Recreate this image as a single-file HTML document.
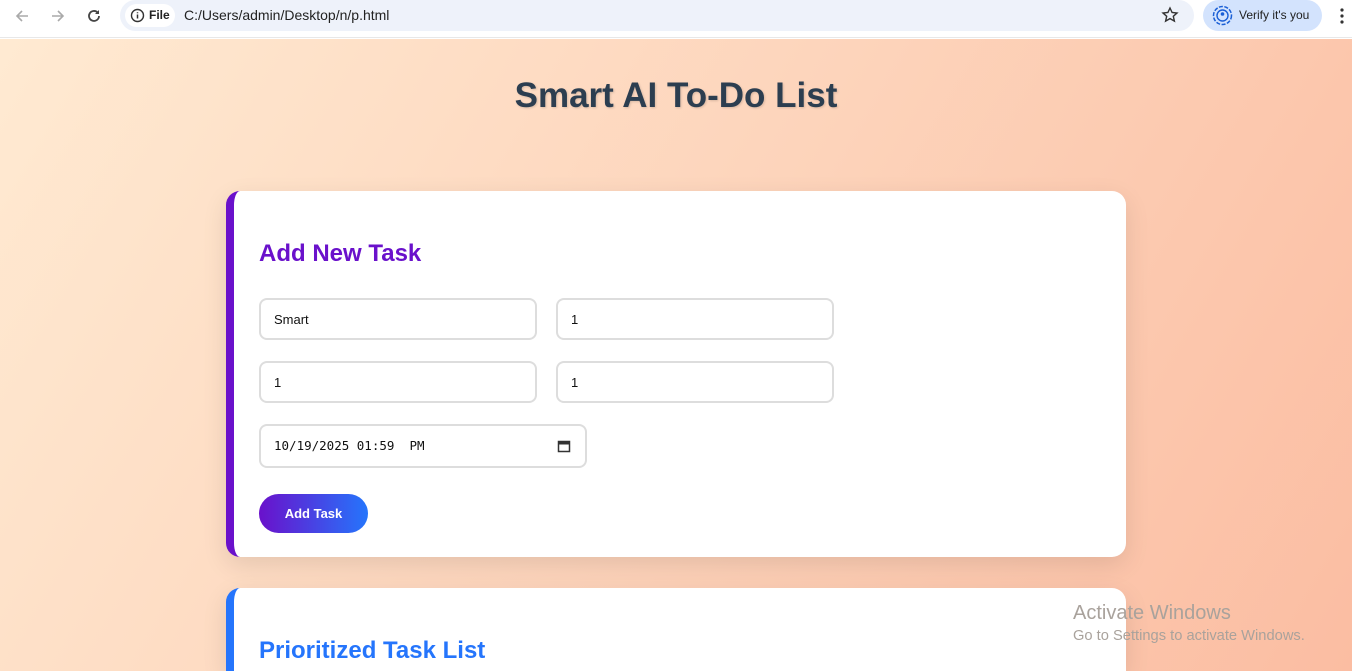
<!DOCTYPE html>
<html><head><meta charset="utf-8"><style>
*{box-sizing:border-box;margin:0;padding:0}
html,body{width:1352px;height:671px;overflow:hidden}
body{font-family:"Liberation Sans",sans-serif;position:relative;background:#fff}
.bar{position:absolute;left:0;top:0;width:1352px;height:38px;background:#fff;border-bottom:1px solid #e8e8e8}
.omni{position:absolute;left:120px;top:0;width:1074px;height:31px;background:#eef2fa;border-radius:16px}
.chip{position:absolute;left:125px;top:4px;width:50px;height:23px;background:#fff;border-radius:12px;font-size:12px;font-weight:bold;color:#222;line-height:23px;padding-left:24px}
.url{position:absolute;left:184px;top:7px;font-size:14px;color:#222}
.verify{position:absolute;left:1203px;top:0;width:119px;height:31px;background:#d3e3fd;border-radius:16px;font-size:12px;color:#1f1f1f;line-height:31px;padding-left:36px}
.page{position:absolute;left:0;top:39px;width:1352px;height:632px;background:linear-gradient(120deg,#ffead2 0%,#fdd4bb 50%,#fbbda2 100%)}
h1{position:absolute;top:76px;left:0;width:1352px;text-align:center;font-size:35px;color:#2c3e50;font-weight:bold;text-shadow:1px 1px 2px rgba(0,0,0,.15)}
.card{position:absolute;left:226px;width:900px;background:#fff;border-radius:14px;box-shadow:0 8px 25px rgba(0,0,0,.1)}
.c1{top:191px;height:366px;border-left:8px solid #6a11cb}
.c2{top:588px;height:83px;border-left:8px solid #2575fc;border-bottom-left-radius:0;border-bottom-right-radius:0}
h2{position:absolute;left:25px;font-size:24px;font-weight:bold}
.in{position:absolute;height:42px;border:2px solid #ddd;border-radius:8px;font-size:13px;color:#111;padding-left:13px;line-height:40px}
.btn{position:absolute;left:25px;top:303px;width:109px;height:39px;border-radius:20px;background:linear-gradient(90deg,#6a11cb,#2575fc);color:#fff;font-weight:bold;font-size:13px;text-align:center;line-height:39px}
.aw{position:absolute;left:1073px;top:602px;color:#a9a29c;font-size:20px}
.aw2{position:absolute;left:1073px;top:628px;color:#a9a29c;font-size:14.7px}
</style></head><body>
<div class="bar">
<svg style="position:absolute;left:13px;top:7px" width="18" height="18" viewBox="0 0 18 18"><path d="M15 9H4M9 4L4 9l5 5" stroke="#aaa" stroke-width="1.6" fill="none"/></svg>
<svg style="position:absolute;left:49px;top:7px" width="18" height="18" viewBox="0 0 18 18"><path d="M3 9h11M9 4l5 5-5 5" stroke="#aaa" stroke-width="1.6" fill="none"/></svg>
<svg style="position:absolute;left:85px;top:7px" width="18" height="18" viewBox="0 0 18 18"><path d="M14 9a5 5 0 1 1-1.5-3.6" stroke="#444" stroke-width="1.8" fill="none"/><path d="M14 3v4h-4z" fill="#444"/></svg>
<div class="omni"></div>
<div class="chip">File</div>
<svg style="position:absolute;left:130px;top:8px" width="15" height="15" viewBox="0 0 15 15"><circle cx="7.5" cy="7.5" r="6" stroke="#333" stroke-width="1.4" fill="none"/><path d="M7.5 6.5v4M7.5 4.2v1" stroke="#333" stroke-width="1.5"/></svg>
<div class="url">C:/Users/admin/Desktop/n/p.html</div>
<svg style="position:absolute;left:1161px;top:6px" width="18" height="18" viewBox="0 0 18 18"><path d="M9 2l2.1 4.5 4.9.5-3.7 3.3 1.1 4.8L9 12.6 4.6 15.1l1.1-4.8L2 7l4.9-.5z" stroke="#333" stroke-width="1.4" fill="none"/></svg>
<div class="verify">Verify it's you</div>
<svg style="position:absolute;left:1212px;top:5px" width="21" height="21" viewBox="0 0 21 21"><circle cx="10.5" cy="10.5" r="9" stroke="#1a5fd6" stroke-width="1.5" fill="none" stroke-dasharray="4 1.5"/><circle cx="10.5" cy="10.5" r="5.5" stroke="#1a5fd6" stroke-width="1.4" fill="none"/><circle cx="10.5" cy="9" r="1.8" fill="#1a5fd6"/></svg>
<svg style="position:absolute;left:1339px;top:7px" width="6" height="18"><circle cx="3" cy="3" r="1.6" fill="#333"/><circle cx="3" cy="9" r="1.6" fill="#333"/><circle cx="3" cy="15" r="1.6" fill="#333"/></svg>
</div>
<div class="page"></div>
<h1>Smart AI To-Do List</h1>
<div class="card c1">
<h2 style="top:49px;color:#6a11cb">Add New Task</h2>
<div class="in" style="left:25px;top:107px;width:278px">Smart</div>
<div class="in" style="left:322px;top:107px;width:278px">1</div>
<div class="in" style="left:25px;top:170px;width:278px">1</div>
<div class="in" style="left:322px;top:170px;width:278px">1</div>
<div class="in" style="left:25px;top:233px;width:328px;height:44px;font-family:'DejaVu Sans Mono','Liberation Mono',monospace;font-size:12.5px;line-height:40px;white-space:pre">10/19/2025 01:59  PM
<svg style="position:absolute;right:14px;top:13px" width="14" height="14" viewBox="0 0 14 14"><rect x="1.5" y="2.5" width="11" height="10" stroke="#333" stroke-width="1.5" fill="none"/><rect x="1.5" y="2.5" width="11" height="3" fill="#333"/></svg></div>
<div class="btn">Add Task</div>
</div>
<div class="card c2">
<h2 style="top:49px;color:#2575fc">Prioritized Task List</h2>
</div>
<div class="aw">Activate Windows</div>
<div class="aw2">Go to Settings to activate Windows.</div>
</body></html>
